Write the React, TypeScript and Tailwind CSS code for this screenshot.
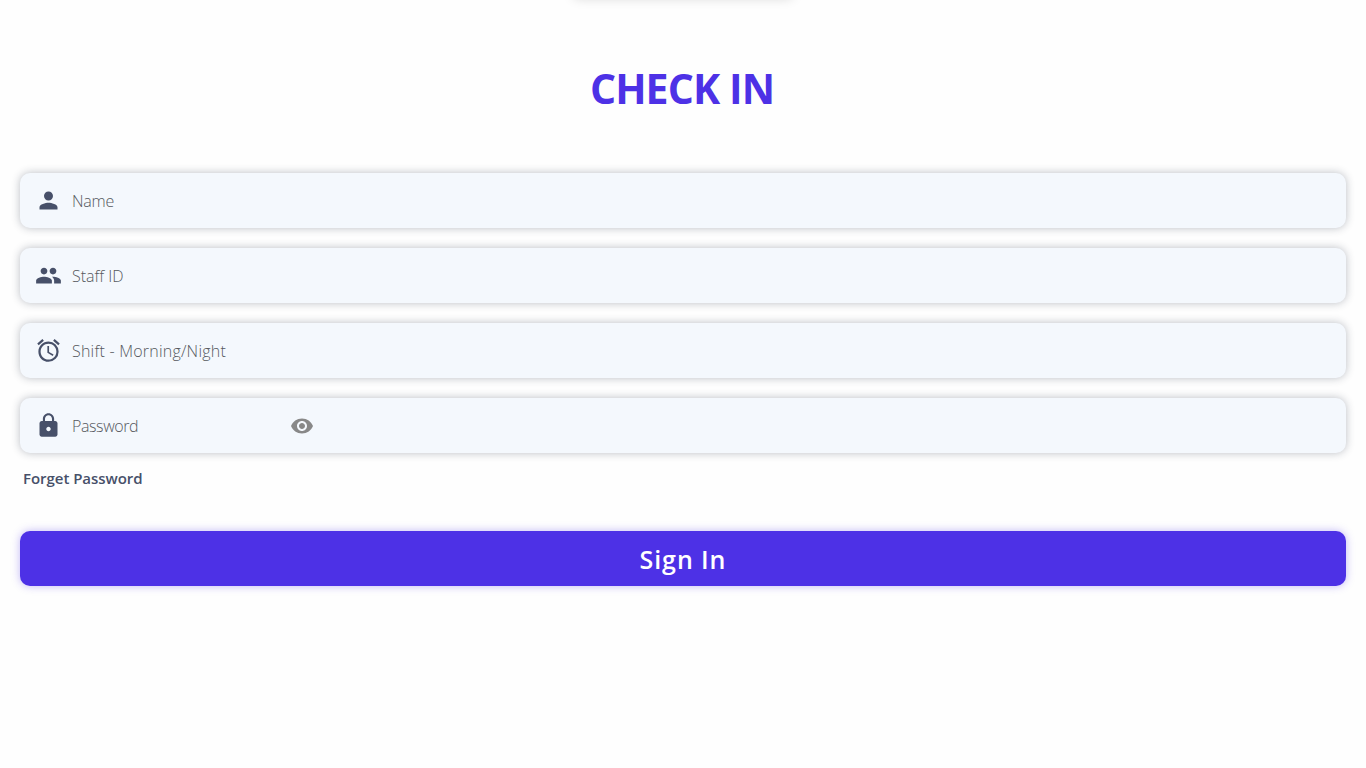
import type { ReactNode } from "react";
import { MdPerson, MdPeople, MdAccessAlarm, MdLock, MdVisibility } from "react-icons/md";

function Field({
  icon,
  label,
  labelClass,
  children,
}: {
  icon: ReactNode;
  label: string;
  labelClass: string;
  children?: ReactNode;
}) {
  return (
    <div className="flex h-[55px] items-center rounded-[10px] bg-[#f4f8fd] pl-[15px] shadow-[0_0_8px_rgba(30,40,60,0.3)]">
      <span className="shrink-0 text-[27px] text-[#475069]">{icon}</span>
      <div className="ml-2.5 w-[218px] whitespace-nowrap text-base font-light text-[#56595d]">
        <span className={labelClass}>{label}</span>
      </div>
      {children}
    </div>
  );
}

export default function App() {
  return (
    <main className="flex h-screen flex-col overflow-hidden bg-[#fefefe] px-5 font-['Open_Sans','Noto_Sans',sans-serif]">
      <div className="mx-auto -mt-3 h-2.5 w-[220px] shrink-0 rounded-[10px] bg-white shadow-[0_0_12px_rgba(0,0,0,0.17)]" />
      <h1 className="mt-[63px] text-center text-[41px] leading-[54px] font-bold text-[#4d31e6]">
        <span className="mr-0.5 inline-block tracking-[-0.9px]">CHECK IN</span>
      </h1>
      <form className="mt-[58px] flex flex-col">
        <div className="flex flex-col gap-5">
          <Field icon={<MdPerson />} label="Name" labelClass="tracking-[-0.2px]" />
          <Field icon={<MdPeople />} label="Staff ID" labelClass="tracking-[0px]" />
          <Field icon={<MdAccessAlarm />} label="Shift - Morning/Night" labelClass="tracking-[0.22px]" />
          <Field icon={<MdLock />} label="Password" labelClass="tracking-[-0.4px]">
            <MdVisibility className="text-2xl text-[#888888]" />
          </Field>
        </div>
        <a className="mt-[14px] ml-[3px] text-[15px] leading-[22px] font-semibold text-[#475069]">
          <span className="tracking-[-0.04px]">Forget Password</span>
        </a>
        <button
          type="button"
          className="mt-[42px] h-[55px] rounded-[10px] bg-[#4d31e6] pt-0.5 text-center text-[25px] font-semibold text-white shadow-[0_0_8px_rgba(77,49,230,0.35)]"
        >
          <span className="tracking-[0.9px]">Sign In</span>
        </button>
      </form>
    </main>
  );
}
